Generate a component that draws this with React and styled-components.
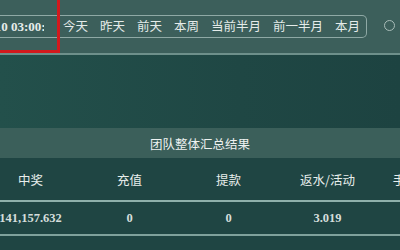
import React from 'react';
import styled, { createGlobalStyle } from 'styled-components';

const GlobalStyle = createGlobalStyle`
  html, body {
    margin: 0;
    padding: 0;
    background: #1f4543;
    overflow: hidden;
  }
  body {
    font-family: "Noto Sans CJK SC", "Noto Sans", sans-serif;
  }
`;

const shortcuts = ['今天', '昨天', '前天', '本周', '当前半月', '前一半月', '本月'];

const columns = [
  { label: '中奖', value: '141,157.632' },
  { label: '充值', value: '0' },
  { label: '提款', value: '0' },
  { label: '返水/活动', value: '3.019' },
  { label: '手续费/优惠', value: '0' },
];

const App = () => {
  return (
    <>
      <GlobalStyle />
      <Page>
        <TopBar>
          <DateField>
            <DateBox>
              <DateInput>2024-01-10 03:00:00</DateInput>
            </DateBox>
          </DateField>
          <Shortcuts>
            {shortcuts.map((s) => (
              <Shortcut key={s}>{s}</Shortcut>
            ))}
          </Shortcuts>
          <Radio />
        </TopBar>
        <Spacer />
        <TitleBar>团队整体汇总结果</TitleBar>
        <Table>
          <HeadRow>
            {columns.map((c) => (
              <HeadCell key={c.label}>{c.label}</HeadCell>
            ))}
          </HeadRow>
          <DataRow>
            {columns.map((c) => (
              <DataCell key={c.label}>{c.value}</DataCell>
            ))}
          </DataRow>
        </Table>
      </Page>
    </>
  );
};

const Page = styled.div`
  width: 400px;
  height: 250px;
  overflow: hidden;
  background: #1f4543;
`;

const TopBar = styled.div`
  display: flex;
  align-items: flex-start;
  height: 53px;
  background: #3c5f5b;
  border-bottom: 2px solid #6e908b;
  margin-left: -62px;
`;

const DateField = styled.div`
  flex: none;
  width: 119px;
  height: 50px;
  border-right: 3px solid #d2191d;
  border-bottom: 3px solid #d2191d;
  display: flex;
  align-items: center;
`;

const DateBox = styled.div`
  width: 100%;
  height: 21px;
  margin-top: 3px;
  border-top: 1.5px solid #8fa9a5;
  border-bottom: 1.5px solid #8fa9a5;
  display: flex;
  align-items: center;
`;

const DateInput = styled.div`
  width: 97px;
  padding-left: 9px;
  overflow: hidden;
  white-space: nowrap;
  font-family: "Liberation Serif", serif;
  font-weight: bold;
  font-size: 13px;
  color: #e6ecea;
`;

const Shortcuts = styled.div`
  flex: none;
  display: flex;
  align-items: center;
  gap: 12px;
  height: 21px;
  margin-top: 14.5px;
  padding: 0 6px 0 3px;
  border: 1.5px solid #8fa9a5;
  border-left: none;
  border-radius: 0 5px 5px 0;
`;

const Shortcut = styled.span`
  font-size: 12.5px;
  color: #e4ebe9;
  line-height: 1;
  white-space: nowrap;
`;

const Radio = styled.span`
  flex: none;
  width: 9px;
  height: 9px;
  margin: 20px 0 0 17px;
  border: 1.5px solid #a9bdb9;
  border-radius: 50%;
`;

const Spacer = styled.div`
  height: 73px;
  background: linear-gradient(90deg, #23504b 0%, #1f4744 60%, #1d4341 100%);
`;

const TitleBar = styled.div`
  height: 30px;
  background: #3b5f5a;
  display: flex;
  align-items: center;
  justify-content: center;
  font-size: 12.5px;
  color: #eef2f1;
`;

const Table = styled.div`
  margin-left: -19px;
  width: 495px;
`;

const Row = styled.div`
  display: grid;
  grid-template-columns: repeat(5, 99px);
  align-items: center;
  justify-items: center;
`;

const HeadRow = styled(Row)`
  height: 42px;
  border-bottom: 2px solid #8fb0ab;
`;

const DataRow = styled(Row)`
  height: 32px;
  border-bottom: 2px solid #7fa19c;
`;

const HeadCell = styled.div`
  font-size: 12.5px;
  color: #e8eeec;
  white-space: nowrap;
`;

const DataCell = styled.div`
  font-family: "Liberation Serif", serif;
  font-weight: bold;
  font-size: 12.5px;
  color: #d5dedc;
  white-space: nowrap;
`;

export default App;
